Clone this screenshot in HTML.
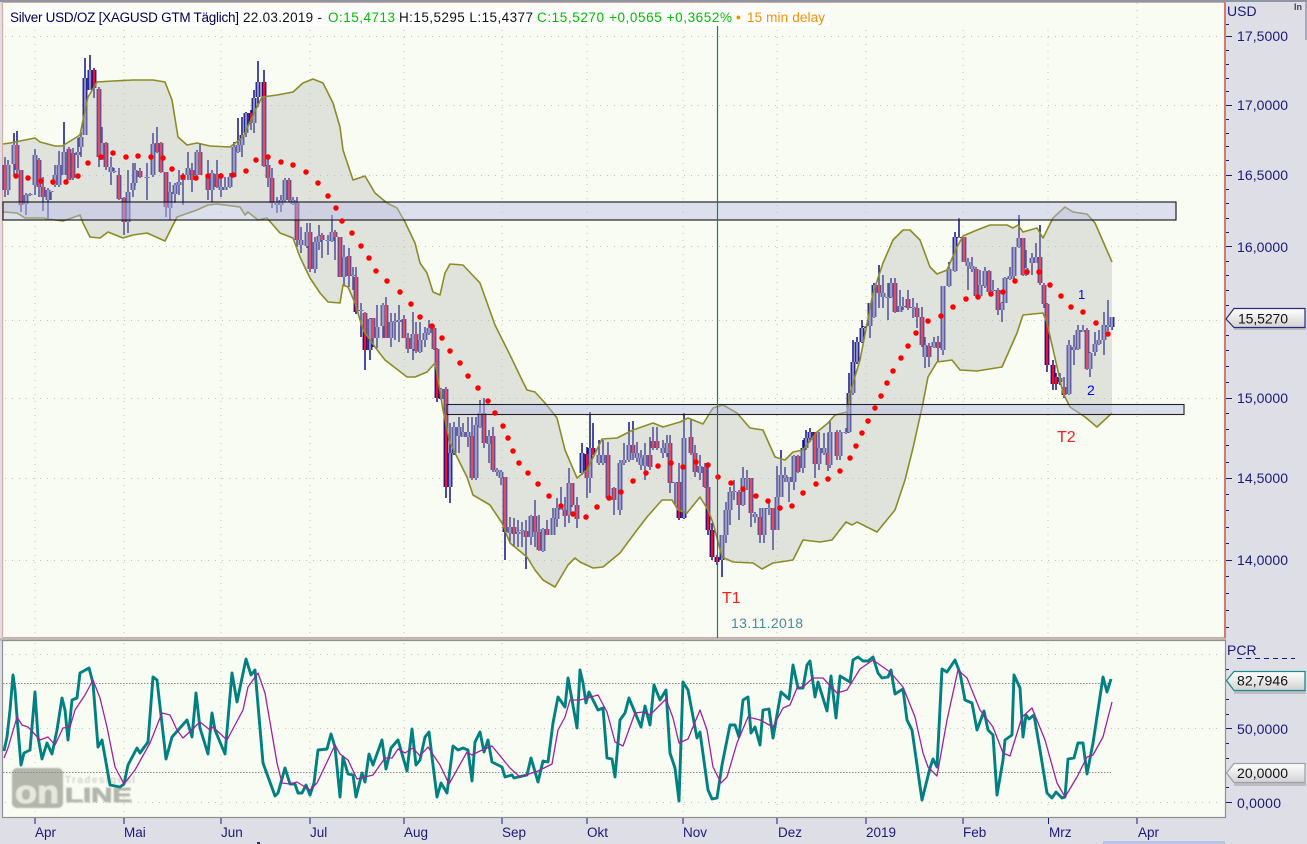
<!DOCTYPE html>
<html><head><meta charset="utf-8"><title>Silver USD/OZ</title>
<style>html,body{margin:0;padding:0;background:#dedee6;width:1307px;height:844px;overflow:hidden}svg{display:block;font-family:"Liberation Sans",sans-serif}</style></head>
<body>
<svg width="1307" height="844" viewBox="0 0 1307 844" xmlns="http://www.w3.org/2000/svg">
<defs>
<linearGradient id="tg" x1="0" y1="0" x2="0" y2="1"><stop offset="0" stop-color="#fff"/><stop offset="1" stop-color="#d2d2d2"/></linearGradient>
<filter id="bl"><feGaussianBlur stdDeviation=".7"/></filter>
<filter id="sf" x="-2%" y="-2%" width="104%" height="104%"><feGaussianBlur stdDeviation=".35"/></filter>
<path id="B" d="M8 165V190M14 145V164M26 195V204M30 194V195M35 155V185M48 190V200M51 191V192M55 175V185M59 165V185M64 152V175M78 152V155M81 137V147M85 78V135M90 70V90M102 143V160M111 167V172M114 171V172M128 192V222M133 183V190M135 170V183M147 177V178M153 144V175M170 192V208M175 185V194M179 182V185M183 175V180M188 168V175M197 152V175M212 173V190M221 187V190M225 187V190M230 177V187M234 147V177M238 145V152M242 135V145M246 113V133M254 98V123M258 82V97M277 203V205M281 200V205M285 180V200M293 200V204M301 240V245M307 232V246M315 242V269M319 236V242M328 240V241M332 232V241M344 257V277M353 275V276M361 310V311M370 319V350M377 327V338M383 305V326M391 322V338M395 321V322M399 320V322M413 334V349M420 340V352M425 333V340M429 328V333M441 389V399M450 453V487M454 427V453M459 427V436M463 432V437M468 432V437M476 425V478M480 413V427M489 436V444M497 470V472M501 472V478M510 527V533M518 532V534M522 530V531M531 516V537M543 529V551M553 518V535M557 508V519M561 505V510M569 483V515M582 453V473M590 448V478M599 455V463M603 455V463M620 463V510M624 460V463M629 445V460M637 453V458M641 458V465M645 455V466M663 448V453M667 443V453M675 482V483M684 438V518M700 466V473M722 535V560M726 510V535M730 492V510M734 491V492M743 478V505M747 478V479M755 514V517M764 508V535M769 508V509M777 497V530M781 475V497M785 475V478M789 477V482M794 456V482M803 448V468M806 438V448M810 432V438M819 448V464M824 448V453M830 432V465M840 432V456M846 432V433M849 393V432M853 362V393M857 342V362M862 328V342M865 326V327M870 303V326M874 285V317M883 293V297M888 297V298M891 283V297M900 306V312M903 306V307M913 307V308M925 345V357M934 342V347M943 286V350M949 269V286M955 237V271M959 237V238M968 262V266M972 266V269M980 285V296M985 271V286M993 290V291M1002 303V310M1005 278V303M1010 276V279M1014 247V276M1019 238V247M1026 268V275M1032 258V263M1036 257V263M1060 378V382M1069 345V394M1074 347V350M1078 330V349M1083 330V332M1090 353V369M1095 344V352M1099 340V344M1104 325V340M1108 325V327M1112 317V327"/>
<path id="R" d="M5 165V190M17 145V170M21 170V205M39 160V187M43 187V197M69 149V180M73 153V178M94 70V88M99 89V157M106 143V167M119 175V199M124 198V222M140 171V177M157 143V152M161 143V172M166 172V207M192 170V180M200 152V175M208 175V190M217 174V187M251 113V123M264 82V166M268 165V178M272 178V203M289 180V200M297 203V240M310 232V269M322 235V240M335 232V237M340 237V277M349 256V276M356 277V312M365 313V350M373 318V338M386 305V338M404 319V338M408 338V349M416 334V351M434 328V349M437 349V398M446 389V487M472 436V478M484 413V443M493 436V470M505 477V532M514 527V534M526 531V537M535 516V532M539 532V550M547 529V535M565 510V516M572 483V505M577 505V519M587 454V478M593 448V455M608 455V498M614 488V500M633 445V453M650 455V467M653 441V448M657 441V448M670 443V483M679 482V518M691 437V453M695 453V472M705 467V487M708 487V530M712 530V557M717 557V562M739 492V505M751 478V513M760 517V535M773 508V530M798 456V472M815 432V464M828 453V465M837 432V456M879 285V293M895 283V312M908 299V308M917 308V317M922 317V345M929 346V357M938 342V348M964 237V262M976 269V296M989 271V292M998 290V310M1023 238V275M1040 257V283M1044 285V304M1047 304V365M1053 365V384M1056 377V384M1064 387V395M1087 330V369"/>
</defs>
<rect width="1307" height="844" fill="#dedee6"/>
<rect x="0" y="0" width="1307" height="2" fill="#8e96a6"/>
<rect x="1305" y="2" width="2" height="38" fill="#a8a8b8"/>
<!-- main panel -->
<rect x="2.5" y="2.5" width="1222" height="635" fill="#f9fcf2" stroke="#d6a8a0"/>
<path d="M1225 2V638" stroke="#d9776a" stroke-width="2"/>
<g stroke="#c2c4bc" stroke-width="1" stroke-dasharray="1 6" fill="none">
<path d="M35 30V637M124 30V637M221 30V637M310 30V637M404 30V637M502 30V637M587 30V637M683 30V637M777 30V637M866 30V637M963 30V637M1048 30V637M1137 3V637"/>
<path d="M5 36.5H1222M5 105.500H1222M5 175.500H1222M5 246.500H1222M5 320.500H1222M5 398.500H1222M5 478.500H1222M5 560.500H1222"/>
</g>
<!-- candles -->
<g filter="url(#sf)">
<path fill="none" stroke="#000080" stroke-width="1.400" d="M5 157V197M8 160V195M14 133V175M17 131V177M21 170V212M26 193V215M30 193V196M35 149V195M39 158V197M43 177V211M48 188V218M51 191V200M55 165V187M59 151V187M64 122V165M69 147V180M73 148V180M78 138V168M81 132V157M85 58V135M90 55V90M94 68V98M99 87V167M102 127V160M106 142V170M111 157V185M114 168V173M119 168V200M124 197V235M128 170V233M133 163V197M135 163V186M140 168V178M147 163V200M153 133V177M157 127V153M161 142V173M166 172V217M170 182V220M175 183V203M179 170V195M183 173V205M188 152V180M192 163V192M197 150V178M200 143V175M208 160V200M212 170V202M217 160V188M221 173V197M225 177V190M230 173V188M234 142V177M238 118V153M242 117V157M246 112V137M251 110V130M254 90V133M258 61V107M264 70V167M268 155V187M272 168V208M277 197V213M281 195V212M285 178V202M289 178V202M293 197V205M297 197V247M301 227V253M307 223V248M310 223V272M315 237V273M319 225V250M322 233V258M328 235V255M332 215V242M335 230V260M340 237V277M344 245V285M349 248V287M353 267V290M356 267V314M361 303V337M365 312V370M370 318V360M373 318V347M377 305V348M383 303V338M386 297V338M391 313V347M395 313V340M399 305V342M404 315V338M408 333V353M413 312V360M416 322V353M420 322V353M425 327V347M429 320V335M434 325V350M437 348V402M441 388V400M446 387V498M450 423V503M454 422V455M459 417V453M463 423V437M468 417V447M472 417V480M476 417V480M480 400V428M484 398V448M489 430V463M493 427V472M497 468V476M501 470V485M505 477V560M510 517V543M514 518V547M518 520V547M522 522V547M526 520V569M531 515V545M535 500V547M539 515V551M543 528V552M547 520V535M553 508V535M557 498V527M561 487V510M565 497V527M569 468V523M572 483V507M577 497V528M582 443V475M587 447V498M590 412V493M593 423V455M599 440V465M603 440V465M608 442V500M614 487V515M620 460V515M624 443V465M629 422V462M633 421V460M637 442V462M641 450V470M645 443V480M650 437V470M653 427V450M657 427V450M663 440V458M667 435V457M670 435V493M675 482V505M679 463V520M684 413V519M691 420V455M695 445V477M700 455V480M705 463V488M708 463V535M712 523V560M717 555V565M722 535V577M726 502V543M730 487V525M734 480V500M739 490V520M743 467V506M747 470V490M751 478V527M755 512V523M760 508V543M764 508V543M769 500V515M773 508V550M777 466V530M781 450V497M785 467V482M789 477V502M794 455V490M798 455V473M803 440V473M806 430V450M810 428V442M815 432V478M819 432V470M824 433V455M828 433V471M830 420V468M837 430V460M840 430V460M846 428V434M849 373V433M853 340V395M857 337V364M862 320V343M865 326V328M870 303V338M874 283V318M879 265V308M883 275V308M888 283V320M891 278V298M895 278V313M900 290V312M903 297V310M908 290V310M913 298V318M917 303V328M922 307V347M925 337V368M929 343V367M934 337V348M938 336V362M943 286V355M949 262V287M955 232V272M959 218V238M964 237V262M968 258V290M972 257V272M976 267V297M980 270V297M985 267V288M989 270V294M993 280V292M998 288V315M1002 302V322M1005 277V303M1010 267V280M1014 247V280M1019 215V248M1023 238V276M1026 250V276M1032 253V275M1036 243V263M1040 225V285M1044 283V308M1047 303V372M1053 360V390M1056 373V390M1060 373V385M1064 377V398M1069 340V395M1074 335V365M1078 325V350M1083 325V332M1087 328V370M1090 352V377M1095 332V356M1099 330V345M1104 312V355M1108 300V331M1112 317V330"/>
<g fill="none" stroke="#000080" stroke-width="4.800"><use href="#B"/><use href="#R"/></g>
<use href="#B" fill="none" stroke="#8a8cc8" stroke-width="2.600"/>
<use href="#R" fill="none" stroke="#f01030" stroke-width="2.600"/>
</g>
<!-- bollinger band -->
<path fill="#b7b8b8" fill-opacity=".38" d="M3 144L10 143 20 141 35 138 40 142 55 146 62 146 72 140 80 135 84 115 88 97 97 82 113 81 133 80 153 80 165 82 172 100 178 137 187 145 197 143 210 146 230 147 243 137 257 107 262 97 277 95 293 92 303 83 313 79 323 83 333 103 340 127 343 150 353 180 365 176 375 193 387 203 397 208 405 222 415 243 420 263 427 273 433 292 440 295 445 273 450 264 463 265 480 283 495 325 510 355 522 380 527 390 535 392 545 403 557 418 565 450 577 478 587 470 602 439 617 438 633 430 653 423 663 427 680 422 688 418 703 424 713 408 723 405 737 413 750 428 763 430 775 457 785 460 793 452 803 450 817 432 828 423 835 415 847 412 850 393 860 360 873 293 883 263 893 240 903 230 910 230 920 240 930 267 937 274 947 270 957 247 963 236 977 230 990 225 1007 225 1013 228 1018 225 1023 232 1037 228 1043 238 1053 218 1065 207 1073 212 1087 214 1095 223 1112 262V413L1097 427 1085 417 1070 407 1063 393 1047 323 1043 313 1023 315 1017 333 1002 367 977 371 960 370 952 360 937 362 928 377 923 403 913 448 905 480 895 510 877 532 857 522 852 525 846 522 832 540 820 542 803 540 793 560 780 562 773 563 762 569 753 563 733 562 722 557 713 523 708 510 700 497 687 513 678 510 672 500 662 500 647 517 637 530 620 553 603 567 593 568 580 562 575 558 568 565 555 587 543 580 535 570 527 557 510 543 502 523 490 505 473 495 467 477 450 443 443 410 437 373 435 363 427 372 415 377 407 377 385 360 375 347 363 330 355 303 348 287 343 285 340 303 328 302 320 293 310 278 300 257 293 238 280 233 267 218 258 220 248 212 245 215 240 207 217 204 208 205 197 210 177 217 165 241 147 233 133 235 123 238 108 232 100 238 90 237 83 223 80 215 63 221 48 219 43 218 25 218 17 213 3 212Z"/>
<g fill="none" stroke="#8c8c28" stroke-width="1.600" stroke-linejoin="round" filter="url(#sf)">
<path d="M3 144L10 143 20 141 35 138 40 142 55 146 62 146 72 140 80 135 84 115 88 97 97 82 113 81 133 80 153 80 165 82 172 100 178 137 187 145 197 143 210 146 230 147 243 137 257 107 262 97 277 95 293 92 303 83 313 79 323 83 333 103 340 127 343 150 353 180 365 176 375 193 387 203 397 208 405 222 415 243 420 263 427 273 433 292 440 295 445 273 450 264 463 265 480 283 495 325 510 355 522 380 527 390 535 392 545 403 557 418 565 450 577 478 587 470 602 439 617 438 633 430 653 423 663 427 680 422 688 418 703 424 713 408 723 405 737 413 750 428 763 430 775 457 785 460 793 452 803 450 817 432 828 423 835 415 847 412 850 393 860 360 873 293 883 263 893 240 903 230 910 230 920 240 930 267 937 274 947 270 957 247 963 236 977 230 990 225 1007 225 1013 228 1018 225 1023 232 1037 228 1043 238 1053 218 1065 207 1073 212 1087 214 1095 223 1112 262"/>
<path d="M1112 413L1097 427 1085 417 1070 407 1063 393 1047 323 1043 313 1023 315 1017 333 1002 367 977 371 960 370 952 360 937 362 928 377 923 403 913 448 905 480 895 510 877 532 857 522 852 525 846 522 832 540 820 542 803 540 793 560 780 562 773 563 762 569 753 563 733 562 722 557 713 523 708 510 700 497 687 513 678 510 672 500 662 500 647 517 637 530 620 553 603 567 593 568 580 562 575 558 568 565 555 587 543 580 535 570 527 557 510 543 502 523 490 505 473 495 467 477 450 443 443 410 437 373 435 363 427 372 415 377 407 377 385 360 375 347 363 330 355 303 348 287 343 285 340 303 328 302 320 293 310 278 300 257 293 238 280 233 267 218 258 220 248 212 245 215 240 207 217 204 208 205 197 210 177 217 165 241 147 233 133 235 123 238 108 232 100 238 90 237 83 223 80 215 63 221 48 219 43 218 25 218 17 213 3 212"/>
</g>
<!-- rectangles -->
<rect x="3" y="202" width="1173" height="18" fill="#b4b9e6" fill-opacity=".42" stroke="#111" stroke-width="1.100"/>
<rect x="447" y="404.500" width="737" height="10" fill="#b4b9e6" fill-opacity=".42" stroke="#222" stroke-width="1.100"/>
<!-- SAR dots -->
<path fill="none" stroke="#ff0000" stroke-width="5.500" stroke-linecap="round" d="M16 176h0M28 178h0M41 181h0M53 182h0M66 182h0M78 176h0M88 163h0M101 157h0M113 153h0M126 157h0M138 156h0M151 157h0M163 158h0M172 169h0M183 177h0M196 178h0M208 176h0M221 176h0M233 175h0M246 171h0M256 160h0M268 157h0M281 162h0M293 165h0M306 172h0M318 183h0M328 196h0M336 208h0M342 221h0M352 233h0M361 246h0M369 258h0M376 271h0M387 281h0M400 292h0M411 304h0M420 317h0M432 326h0M442 338h0M450 351h0M460 363h0M468 376h0M478 388h0M488 401h0M495 413h0M503 426h0M508 438h0M513 451h0M519 463h0M528 473h0M538 484h0M549 496h0M561 506h0M573 514h0M586 517h0M597 507h0M609 498h0M621 492h0M633 481h0M646 473h0M658 466h0M671 463h0M683 467h0M696 462h0M708 465h0M718 477h0M731 483h0M743 489h0M756 496h0M768 501h0M780 508h0M792 506h0M803 493h0M816 484h0M828 479h0M840 471h0M850 458h0M856 446h0M862 433h0M868 421h0M875 408h0M881 396h0M887 383h0M893 371h0M901 358h0M908 346h0M916 333h0M928 321h0M941 316h0M953 307h0M966 299h0M978 297h0M991 294h0M1003 292h0M1015 281h0M1027 272h0M1039 272h0M1050 285h0M1061 296h0M1071 307h0M1083 312h0M1096 323h0M1108 334h0"/>
<!-- crosshair -->
<path d="M717.5 26V638M717.5 641V817" stroke="#2f7474" stroke-width="1.200"/>
<!-- header -->
<rect x="6" y="8" width="824" height="18" fill="#fff"/>
<g font-size="13.500">
<text x="10" y="22" fill="#000050" textLength="229">Silver USD/OZ [XAGUSD GTM Täglich]</text>
<text x="243" y="22" fill="#111" textLength="79">22.03.2019 -</text>
<text x="328" y="22" fill="#00bb00" textLength="67">O:15,4713</text>
<text x="399" y="22" fill="#111" textLength="134">H:15,5295 L:15,4377</text>
<text x="537" y="22" fill="#00bb00" textLength="195">C:15,5270 +0,0565 +0,3652%</text>
<text x="736" y="22" fill="#f09000" font-weight="bold">•</text>
<text x="747" y="22" fill="#f09000" textLength="78">15 min delay</text>
</g>
<!-- annotations -->
<text x="722" y="603" font-size="16" fill="#f02020">T1</text>
<text x="1057" y="442" font-size="16" fill="#f02020">T2</text>
<text x="1078" y="299" font-size="13" fill="#0000ff">1</text>
<text x="1087" y="395" font-size="14" fill="#0000ff">2</text>
<text x="731" y="628" font-size="14" fill="#4a8a96" textLength="72">13.11.2018</text>
<!-- right axis -->
<g fill="#1a1a78" font-size="14">
<text x="1227" y="16">USD</text>
<text x="1237" y="41" textLength="51">17,5000</text>
<text x="1237" y="110" textLength="51">17,0000</text>
<text x="1237" y="180" textLength="51">16,5000</text>
<text x="1237" y="252" textLength="51">16,0000</text>
<text x="1237" y="403" textLength="51">15,0000</text>
<text x="1237" y="483" textLength="51">14,5000</text>
<text x="1237" y="565" textLength="51">14,0000</text>
<text x="1227" y="655">PCR</text>
<text x="1237" y="734" textLength="51">50,0000</text>
<text x="1237" y="808" textLength="44">0,0000</text>
</g>
<path stroke="#1a1a78" stroke-width="1" fill="none" d="M1226 36.500h6M1226 105.500h6M1226 175.500h6M1226 246.500h6M1226 398.500h6M1226 478.500h6M1226 560.500h6M1226 24.500h3M1226 50.500h3M1226 64.500h3M1226 78.500h3M1226 91.500h3M1226 119.500h3M1226 133.500h3M1226 146.500h3M1226 160.500h3M1226 189.500h3M1226 203.500h3M1226 218.500h3M1226 232.500h3M1226 261.500h3M1226 275.500h3M1226 290.500h3M1226 305.500h3M1226 335.500h3M1226 350.500h3M1226 366.500h3M1226 382.500h3M1226 413.500h3M1226 429.500h3M1226 445.500h3M1226 462.500h3M1226 494.500h3M1226 510.500h3M1226 527.500h3M1226 543.500h3M1226 576.500h3M1226 593.500h3M1226 610.500h3M1226 627.500h3M1226 728.500h6M1226 802.500h6M1226 669.500h3M1226 699.500h3M1226 714.500h3M1226 743.500h3M1226 758.500h3M1226 787.500h3"/>
<path d="M1237 658.500H1295" stroke="#1a1a78" stroke-dasharray="5 4"/>
<rect x="1234" y="327" width="72" height="3" fill="#bcbcc4"/>
<path d="M1226 319L1234 308.500H1305V327.500H1234Z" fill="url(#tg)" stroke="#2a2a80" stroke-width="1.200"/>
<text x="1238" y="323.500" font-size="14" fill="#111" textLength="50">15,5270</text>
<rect x="1234" y="690" width="72" height="4" fill="#bcbcc4"/>
<path d="M1226.500 680.500L1234 671.500H1305V690.500H1234Z" fill="url(#tg)" stroke="#1a8a8a" stroke-width="1.300"/>
<text x="1237" y="685.500" font-size="14" fill="#111" textLength="51">82,7946</text>
<rect x="1234" y="783" width="72" height="3" fill="#bcbcc4"/>
<path d="M1226.500 773L1234 763.500H1305V782.500H1234Z" fill="url(#tg)" stroke="#a0a0a0" stroke-width="1.200"/>
<text x="1237" y="778" font-size="14" fill="#111" textLength="51">20,0000</text>
<text x="1294" y="10" font-size="9" font-weight="bold" fill="#445">In</text>
<!-- oscillator panel -->
<rect x="0" y="638" width="1226" height="3" fill="#bdbdbd"/>
<rect x="2.500" y="640.500" width="1223" height="177" fill="#f9fcf2" stroke="#909090" stroke-width="1.200"/>
<g stroke="#c2c4bc" stroke-dasharray="1 6" fill="none">
<path d="M35 643V816M124 643V816M221 643V816M310 643V816M404 643V816M502 643V816M587 643V816M683 643V816M777 643V816M866 643V816M963 643V816M1048 643V816M1137 643V816"/>
<path d="M5 654.500H1222M5 728.500H1222M5 802.500H1222"/>
</g>
<!-- watermark -->
<g filter="url(#bl)">
<rect x="12" y="768" width="51" height="40" rx="5" fill="#b3b6ab"/>
<text x="15" y="803" font-size="32" font-weight="bold" fill="#e6e8de" stroke="#e6e8de" stroke-width=".8" textLength="44" lengthAdjust="spacingAndGlyphs">on</text>
<text x="65" y="802" font-size="20" font-weight="bold" fill="#b3b6ab" stroke="#b3b6ab" stroke-width=".8" textLength="67" lengthAdjust="spacingAndGlyphs">LINE</text>
<text x="65" y="783" font-size="10" font-weight="bold" fill="#d0d2c8" textLength="70">Tradesignal</text>
</g>
<path d="M3 683.500H1111M3 772.500H1111" stroke="#8c8c84" stroke-dasharray="1.500 1.500" fill="none"/>
<g filter="url(#sf)">
<path fill="none" stroke="#008080" stroke-width="2.900" stroke-linejoin="round" d="M4 751L7 737 10 710 13 675 15 690 17 717 21 765 24 753 30 750 35 692 38 737 42 759 47 743 52 754 57 730 62 698 65 710 68 740 72 700 77 698 80 673 89 668 93 683 98 747 102 740 110 785 120 787 124 784 128 765 137 748 140 753 148 742 153 677 157 680 166 759 172 737 187 720 192 737 196 693 200 728 208 754 212 713 215 730 225 754 232 673 237 702 246 659 251 675 255 670 263 763 275 796 278 793 285 768 290 784 295 784 298 793 302 793 306 785 310 795 314 783 318 750 327 749 331 734 335 747 340 797 343 757 348 774 353 775 356 797 362 773 365 782 369 754 373 765 382 740 386 769 391 748 398 740 407 771 412 729 416 765 420 760 425 737 429 732 432 757 437 797 441 783 447 793 453 746 458 750 463 748 468 750 472 781 475 742 480 732 484 752 488 740 492 762 502 767 505 777 512 775 514 778 527 775 531 758 538 782 543 761 548 762 553 723 558 697 565 707 568 678 572 700 577 728 580 670 583 683 586 703 589 692 598 710 603 708 607 758 612 759 615 777 620 720 625 713 629 698 641 727 645 706 650 725 654 685 660 700 666 690 670 753 675 768 679 801 683 682 688 690 697 738 700 732 708 790 712 799 717 798 722 765 730 725 735 725 739 737 743 700 748 697 751 733 755 727 760 745 763 710 769 709 773 738 781 692 789 699 793 665 798 688 803 688 807 665 810 661 815 697 818 682 827 711 831 676 836 718 840 676 850 682 853 660 858 657 863 661 868 661 873 657 878 673 882 678 888 677 891 670 895 694 903 689 907 720 912 730 922 800 930 768 933 759 937 767 942 669 947 672 955 660 960 673 965 700 972 703 977 730 984 711 988 730 993 735 997 795 1003 760 1005 740 1012 735 1014 675 1020 688 1023 737 1026 715 1029 719 1034 715 1040 750 1047 793 1052 798 1056 792 1062 798 1065 797 1068 759 1074 758 1078 743 1083 743 1087 774 1093 743 1103 677 1107 692 1111 679"/>
<path fill="none" stroke="#a020a0" stroke-width="1.300" stroke-linejoin="round" d="M4 758L8 748 17 717 22 725 28 727 40 740 48 737 55 745 63 728 70 727 75 710 85 695 93 680 100 698 107 727 115 767 124 784 135 770 150 743 162 713 170 715 177 730 183 738 200 722 210 730 213 727 227 740 243 710 248 687 258 673 265 693 277 763 282 783 290 784 297 782 310 790 317 783 327 762 335 745 340 754 348 760 357 779 373 775 385 758 392 758 398 749 405 753 413 748 420 756 428 747 440 765 449 784 467 752 472 755 480 751 492 746 510 768 520 777 538 771 552 764 558 730 565 717 570 700 580 700 598 695 607 712 615 742 623 746 635 713 643 712 650 715 666 699 673 718 679 743 688 739 700 710 707 730 713 767 721 783 727 777 737 743 748 717 760 720 773 727 783 708 790 705 797 688 803 687 813 678 823 678 837 693 847 690 860 669 873 660 890 672 903 687 915 717 923 753 928 767 937 776 947 720 958 670 967 678 980 710 993 727 1003 753 1010 756 1022 717 1032 708 1045 740 1057 783 1065 797 1077 777 1087 757 1093 755 1103 737 1112 702"/>
</g>
<!-- bottom axis -->
<path stroke="#1a1a78" stroke-width="1" d="M35 818v6M124 818v6M221 818v6M310 818v6M404 818v6M502 818v6M587 818v6M683 818v6M777 818v6M866 818v6M963 818v6M1048.500 818v6M1137 818v6"/>
<g fill="#1a1a78" font-size="13.500">
<text x="35" y="837">Apr</text><text x="124" y="837">Mai</text><text x="221" y="837">Jun</text><text x="310" y="837">Jul</text><text x="404" y="837">Aug</text><text x="502" y="837">Sep</text><text x="587" y="837">Okt</text><text x="683" y="837">Nov</text><text x="778" y="837">Dez</text><text x="866" y="837">2019</text><text x="963" y="837">Feb</text><text x="1049" y="837">Mrz</text><text x="1138" y="837">Apr</text>
</g>
<rect x="1103" y="841" width="122" height="3" fill="#b8c4e4"/>
<rect x="257" y="842" width="3" height="2" fill="#2a2a80"/>
</svg>
</body></html>
